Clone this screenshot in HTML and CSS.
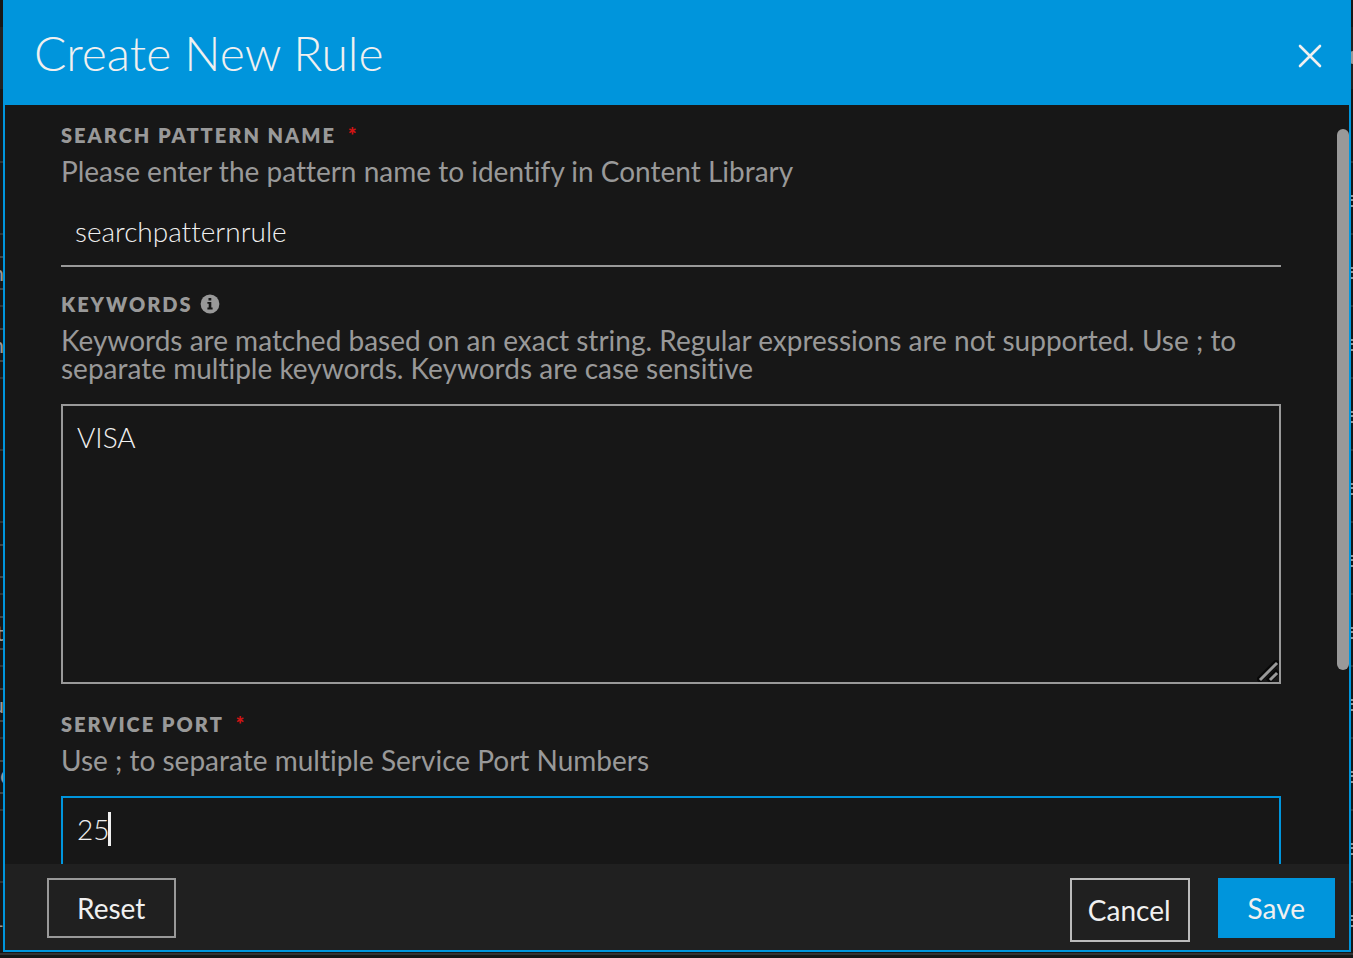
FILE: index.html
```
<!DOCTYPE html>
<html lang="en">
<head>
  <meta charset="UTF-8">
  <meta name="viewport" content="width=device-width, initial-scale=1">
  <title>Create New Rule</title>
  <link rel="stylesheet" href="styles.css">
</head>

<body>
  <!-- rule list behind the dialog -->
  <div class="page" aria-hidden="true">
    <div class="toolbar"><i class="knob"></i></div>
    <div class="row"><i class="menu"></i></div>
    <div class="row"><span class="cell box">n</span><i class="menu"></i></div>
    <div class="row"><span class="cell box">n</span><i class="menu"></i></div>
    <div class="row"><i class="menu"></i></div>
    <div class="row"><i class="menu"></i></div>
    <div class="row"><span class="cell box"></span><i class="menu"></i></div>
    <div class="row"><span class="cell box">t</span><i class="menu"></i></div>
    <div class="row"><span class="cell box">u</span><i class="menu"></i></div>
    <div class="row"><span class="cell box left">C</span><i class="menu"></i></div>
    <div class="row"><i class="menu"></i></div>
    <div class="row"><span class="cell">1</span><i class="menu"></i></div>
  </div>

  <form class="dialog" role="dialog" aria-labelledby="title">
    <header class="dialog-header">
      <h1 id="title">Create New Rule</h1>
      <button type="button" class="close" aria-label="Close">
        <svg width="24" height="24" viewBox="0 0 24 24" fill="none" stroke="#f0f0f0" stroke-width="2.6" stroke-linecap="round">
          <path d="M2 2L22 22M22 2L2 22"/>
        </svg>
      </button>
    </header>

    <div class="dialog-body">
      <div class="fields">
        <div class="field">
          <label for="name">SEARCH PATTERN NAME <span class="required">*</span></label>
          <p class="help">Please enter the pattern name to identify in Content Library</p>
          <input type="text" id="name" class="line-input" value="searchpatternrule">
        </div>

        <div class="field">
          <label for="keywords">KEYWORDS
            <svg class="info" width="20" height="20" viewBox="0 0 20 20">
              <circle cx="10" cy="10" r="9.4" fill="#999"/>
              <path d="M8.5 4h2.8v2.4H8.5zM7.4 8h3.9v5.6h1.3v1.8H7.4v-1.8h1.3V9.8H7.4z" fill="#171717"/>
            </svg>
          </label>
          <p class="help">Keywords are matched based on an exact string. Regular expressions are not supported. Use ; to separate multiple keywords. Keywords are case sensitive</p>
          <div class="area">
            <textarea id="keywords" class="box-input">VISA</textarea>
            <svg class="grip" width="22" height="22" viewBox="0 0 22 22" stroke-linecap="square">
              <path d="M3 19L19 3M13 19L19 13" stroke="#080808" stroke-width="6"/>
              <path d="M4 19L19 4M14 19L19 14" stroke="#999" stroke-width="3"/>
            </svg>
          </div>
        </div>

        <div class="field">
          <label for="port">SERVICE PORT <span class="required">*</span></label>
          <p class="help">Use ; to separate multiple Service Port Numbers</p>
          <div class="area">
            <textarea id="port" class="box-input active">25</textarea>
            <i class="caret"></i>
          </div>
        </div>
      </div>
      <div class="scrollbar"><div class="thumb"></div></div>
    </div>

    <footer class="dialog-footer">
      <button type="reset" class="btn">Reset</button>
      <div class="actions">
        <button type="button" class="btn cancel">Cancel</button>
        <button type="submit" class="btn save">Save</button>
      </div>
    </footer>
  </form>
</body>
</html>
```
FILE: styles.css
```
* {
  box-sizing: border-box;
}
body {
  margin: 0;
  height: 100vh;
  overflow: hidden;
  background: #171717;
  color: #f0f0f0;
  font-family: Lato, sans-serif;
  font-size: 28px;
  font-variant-ligatures: none;
}
.page {
  color: #999;
  font-size: 22px;
}
.toolbar {
  height: 163px;
  display: flex;
  justify-content: flex-end;
  padding-top: 51px;
  border-bottom: 2px solid #333;
  background: linear-gradient(#171717 27px, #222 27px, #222 89px, #171717 89px);
}
.knob {
  width: 3px;
  height: 13px;
  border-radius: 3px 0 0 3px;
  background: #999;
}
.row {
  height: 72px;
  display: flex;
  justify-content: space-between;
  align-items: center;
  padding-top: 6px;
  border-bottom: 2px solid #333;
}
.cell {
  width: 4px;
  height: 34px;
  line-height: 30px;
  overflow: hidden;
  display: flex;
  justify-content: flex-end;
}
.box {
  border: solid #444;
  border-width: 2px 0;
}
.left {
  justify-content: flex-start;
}
.menu {
  width: 2px;
  height: 12px;
  margin-left: auto;
  border: solid #999;
  border-width: 2px 0;
  background: linear-gradient(transparent 2px, #999 2px, #999 4px, transparent 4px);
}

.dialog {
  position: fixed;
  top: 0;
  right: 2px;
  bottom: 6px;
  left: 3px;
  display: flex;
  flex-direction: column;
  border: 2px solid #0095dc;
  border-top: none;
  background: #171717;
}
.dialog-header {
  height: 105px;
  flex: none;
  display: flex;
  align-items: center;
  justify-content: space-between;
  padding: 0 27px 0 29px;
  background: #0095dc;
}
h1 {
  margin: 0;
  font-size: 48px;
  font-weight: 300;
  line-height: 60px;
}
button {
  font-family: inherit;
  cursor: pointer;
}
.close {
  display: flex;
  margin-top: 6px;
  padding: 0;
  border: none;
  background: none;
}
.dialog-body {
  flex: 1;
  min-height: 0;
  display: flex;
  overflow: hidden;
}
.fields {
  flex: 1;
  padding: 18px 68px 0 56px;
}
.field {
  margin-bottom: 25px;
}
label {
  display: flex;
  align-items: center;
  height: 24px;
  color: #999;
  font-size: 20px;
  font-weight: 800;
  letter-spacing: 2px;
}
.required {
  margin-left: 12px;
  color: #d01414;
}
.info {
  margin-left: 7px;
}
.help {
  margin: 10px 0 22px;
  color: #999;
  line-height: 28px;
}
.line-input {
  display: block;
  width: 100%;
  height: 60px;
  padding: 0 14px 10px;
  border: none;
  border-bottom: 2px solid #999;
  background: none;
}
.line-input,
.box-input {
  color: #f0f0f0;
  font-family: inherit;
  font-size: 28px;
  font-weight: 300;
  font-variant-ligatures: none;
  outline: none;
}
.area {
  position: relative;
  padding-bottom: 3px;
}
.box-input {
  display: block;
  width: 100%;
  height: 280px;
  padding: 14px;
  border: 2px solid #999;
  background: #171717;
  line-height: 34px;
  resize: none;
}
.active {
  border-color: #0095dc;
}
.grip {
  position: absolute;
  right: 2px;
  bottom: 5px;
}
.caret {
  position: absolute;
  top: 16px;
  left: 47px;
  width: 3px;
  height: 34px;
  background: #f0f0f0;
}
.scrollbar {
  width: 12px;
  margin-left: -12px;
  padding: 24px 0 194px;
}
.thumb {
  height: 100%;
  border-radius: 6px;
  background: #999;
}
.dialog-footer {
  height: 86px;
  flex: none;
  display: flex;
  justify-content: space-between;
  align-items: flex-start;
  padding: 14px 14px 0 42px;
  background: #202020;
}
.actions {
  display: flex;
  align-items: flex-start;
  gap: 28px;
}
.btn {
  height: 60px;
  padding: 0 29px 0 28px;
  border: 2px solid #999;
  background: #202020;
  color: #f0f0f0;
  font-size: 28px;
}
.cancel {
  height: 64px;
  padding: 0 17px 0 16px;
  border-color: #bbb;
}
.save {
  padding: 0 28px;
  border-color: #0095dc;
  background: #0095dc;
}
```
